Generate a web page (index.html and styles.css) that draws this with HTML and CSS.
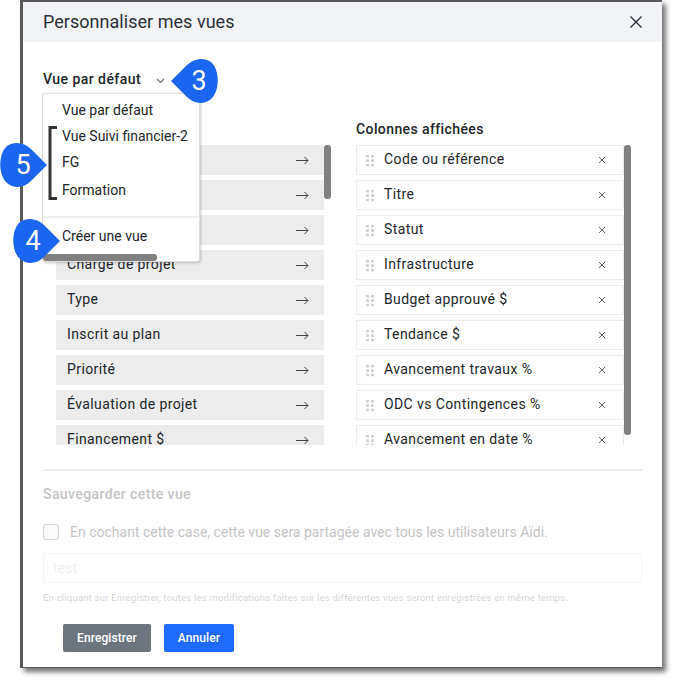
FILE: index.html
```html
<!doctype html>
<html lang="fr">
<head>
  <meta charset="UTF-8">
  <title>Personnaliser mes vues</title>
  <link rel="stylesheet" href="styles.css">
</head>
<body>
  <svg class="defs" width="0" height="0">
    <symbol id="arrow" viewBox="0 0 13 9"><path d="M0 4.5h12M8.5 1l3.5 3.5L8.5 8" stroke="#444" stroke-width="1" fill="none"/></symbol>
    <symbol id="cross" viewBox="0 0 8 8"><path d="M1 1l6 6M7 1L1 7" stroke="#666" stroke-width="1" fill="none"/></symbol>
  </svg>

  <div class="modal">
    <div class="modal-header">
      <h1>Personnaliser mes vues</h1>
      <svg class="close" width="14" height="14" viewBox="0 0 14 14"><path d="M1.5 1.5l11 11M12.5 1.5l-11 11" stroke="#2b2f36" stroke-width="1.4" fill="none"/></svg>
    </div>

    <div class="modal-body">
      <div class="view-select">
        <span>Vue par défaut</span>
        <svg width="9" height="6" viewBox="0 0 9 6"><path d="M1 1l3.5 3.5L8 1" stroke="#6c757d" stroke-width="1.2" fill="none"/></svg>
      </div>

      <div class="columns">
        <div class="col col-left">
          <div class="col-title">Colonnes disponibles</div>
          <div class="scroll-area">
            <div class="list">
              <div class="row"><span>Description</span><svg class="arrow"><use href="#arrow"/></svg></div>
              <div class="row"><span>Responsable</span><svg class="arrow"><use href="#arrow"/></svg></div>
              <div class="row"><span>Phase</span><svg class="arrow"><use href="#arrow"/></svg></div>
              <div class="row"><span>Chargé de projet</span><svg class="arrow"><use href="#arrow"/></svg></div>
              <div class="row"><span>Type</span><svg class="arrow"><use href="#arrow"/></svg></div>
              <div class="row"><span>Inscrit au plan</span><svg class="arrow"><use href="#arrow"/></svg></div>
              <div class="row"><span>Priorité</span><svg class="arrow"><use href="#arrow"/></svg></div>
              <div class="row"><span>Évaluation de projet</span><svg class="arrow"><use href="#arrow"/></svg></div>
              <div class="row"><span>Financement $</span><svg class="arrow"><use href="#arrow"/></svg></div>
            </div>
            <div class="scrollbar scrollbar-short"></div>
          </div>
        </div>

        <div class="col col-right">
          <div class="col-title">Colonnes affichées</div>
          <div class="scroll-area">
            <div class="list">
              <div class="row row-on"><i class="grip"></i><span>Code ou référence</span><svg class="remove"><use href="#cross"/></svg></div>
              <div class="row row-on"><i class="grip"></i><span>Titre</span><svg class="remove"><use href="#cross"/></svg></div>
              <div class="row row-on"><i class="grip"></i><span>Statut</span><svg class="remove"><use href="#cross"/></svg></div>
              <div class="row row-on"><i class="grip"></i><span>Infrastructure</span><svg class="remove"><use href="#cross"/></svg></div>
              <div class="row row-on"><i class="grip"></i><span>Budget approuvé $</span><svg class="remove"><use href="#cross"/></svg></div>
              <div class="row row-on"><i class="grip"></i><span>Tendance $</span><svg class="remove"><use href="#cross"/></svg></div>
              <div class="row row-on"><i class="grip"></i><span>Avancement travaux %</span><svg class="remove"><use href="#cross"/></svg></div>
              <div class="row row-on"><i class="grip"></i><span>ODC vs Contingences %</span><svg class="remove"><use href="#cross"/></svg></div>
              <div class="row row-on"><i class="grip"></i><span>Avancement en date %</span><svg class="remove"><use href="#cross"/></svg></div>
            </div>
            <div class="scrollbar scrollbar-long"></div>
          </div>
        </div>
      </div>

      <div class="save-section">
        <div class="save-title">Sauvegarder cette vue</div>
        <label class="share"><i class="checkbox"></i>En cochant cette case, cette vue sera partagée avec tous les utilisateurs Aïdi.</label>
        <div class="name-input">test</div>
        <div class="hint">En cliquant sur Enregistrer, toutes les modifications faites sur les différentes vues seront enregistrées en même temps.</div>
      </div>

      <div class="actions">
        <button class="btn btn-grey">Enregistrer</button>
        <button class="btn btn-blue">Annuler</button>
      </div>
    </div>

    <!-- menu ouvert par dessus les colonnes -->
    <div class="menu">
      <div class="menu-item">Vue par défaut</div>
      <div class="menu-item">Vue Suivi financier-2</div>
      <div class="menu-item">FG</div>
      <div class="menu-item">Formation</div>
      <div class="menu-sep"></div>
      <div class="menu-item menu-create">Créer une vue</div>
      <div class="menu-scroll"></div>
    </div>
  </div>

  <!-- annotations -->
  <svg class="bracket" width="10" height="74" viewBox="0 0 10 74"><path d="M9 1.5H2v71h7" stroke="#333" stroke-width="3" fill="none"/></svg>
  <div class="pin pin-3"><svg width="48" height="46" viewBox="0 0 48 46"><path d="M1 23 L17 7 C24 0 34 -1 41 4 C50 12 50 33 41 41 C34 47 24 46 17 39 Z" fill="#1a66f0"/></svg><span>3</span></div>
  <div class="pin pin-4"><svg width="48" height="46" viewBox="0 0 48 46"><path d="M47 23 L31 7 C24 0 14 -1 7 4 C-2 12 -2 33 7 41 C14 47 24 46 31 39 Z" fill="#1a66f0"/></svg><span>4</span></div>
  <div class="pin pin-5"><svg width="48" height="46" viewBox="0 0 48 46"><path d="M47 23 L31 7 C24 0 14 -1 7 4 C-2 12 -2 33 7 41 C14 47 24 46 31 39 Z" fill="#1a66f0"/></svg><span>5</span></div>
</body>
</html>
```

FILE: styles.css
```css
body {
  margin: 0;
  width: 677px;
  height: 683px;
  background: #fff;
  font-family: 'Roboto', sans-serif;
  color: #212529;
  overflow: hidden;
  position: relative;
}
.defs {
  position: absolute;
}
.modal {
  position: relative;
  box-sizing: border-box;
  width: 642px;
  height: 668px;
  margin-left: 20px;
  border-top: 2px solid #5a5a5a;
  border-left: 3px solid #5a5a5a;
  border-bottom: 1px solid #5a5a5a;
  background: #fff;
  box-shadow: 4px 4px 5px rgba(0, 0, 0, 0.55);
}
.modal-header {
  height: 40px;
  background: #f1f3f7;
  display: flex;
  align-items: center;
  justify-content: space-between;
  padding: 0 19px 0 20px;
}
.modal-header h1 {
  margin: 0 0 2px;
  font-size: 18px;
  font-weight: 400;
  letter-spacing: 0.03px;
  color: #2b3038;
}
.modal-body {
  padding: 0 20px;
}
.view-select {
  display: flex;
  align-items: center;
  gap: 15px;
  height: 20px;
  margin-top: 27px;
  font-size: 14px;
  font-weight: 500;
  letter-spacing: 0.45px;
}
.view-select svg {
  margin-top: 3px;
}
.columns {
  display: flex;
  gap: 25px;
  margin-top: 30px;
  margin-left: 13px;
}
.col {
  width: 275px;
}
.col-title {
  height: 26px;
  line-height: 20px;
  font-size: 14px;
  font-weight: 500;
  letter-spacing: 0.4px;
}
.scroll-area {
  position: relative;
  height: 300px;
  overflow: hidden;
}
.list {
  display: flex;
  flex-direction: column;
  gap: 5px;
  width: 268px;
}
.row {
  box-sizing: border-box;
  flex: none;
  display: flex;
  align-items: center;
  justify-content: space-between;
  height: 30px;
  padding: 0 15px 0 11px;
  background: #ececec;
  font-size: 14px;
  letter-spacing: 0.4px;
}
.row span {
  margin-bottom: 2px;
}
.arrow {
  width: 13px;
  height: 9px;
}
.row-on {
  background: #fff;
  border: 1px solid #ececec;
  padding: 0 17px 0 8px;
  justify-content: flex-start;
}
.grip {
  width: 10px;
  height: 13px;
  margin-right: 9px;
  background-image: radial-gradient(circle, #d2d2d2 1.5px, transparent 1.7px);
  background-size: 5px 4.4px;
}
.remove {
  width: 8px;
  height: 8px;
  margin-left: auto;
}
.scrollbar {
  position: absolute;
  top: 0;
  left: 268px;
  width: 7px;
  border-radius: 3px;
  background: #808080;
}
.scrollbar-short { height: 54px; }
.scrollbar-long { height: 290px; }
.save-section {
  margin-top: 24px;
  border-top: 2px solid #eee;
  color: #c4c4c4;
}
.save-title {
  margin-top: 14px;
  line-height: 18px;
  font-size: 14px;
  font-weight: 500;
  letter-spacing: 0.4px;
}
.share {
  display: flex;
  align-items: center;
  margin-top: 21px;
  font-size: 14px;
}
.checkbox {
  box-sizing: border-box;
  width: 16px;
  height: 16px;
  margin-right: 11px;
  border: 1px solid #d5d5d5;
  border-radius: 3px;
  background: #fafafa;
}
.name-input {
  box-sizing: border-box;
  height: 30px;
  margin-top: 13px;
  padding-left: 9px;
  border: 1px solid #f3f3f3;
  line-height: 28px;
  font-size: 14px;
  color: #f0f0f0;
}
.hint {
  margin-top: 9px;
  font-size: 9.5px;
  letter-spacing: 0.21px;
  color: #d6d6d6;
}
.actions {
  display: flex;
  gap: 13px;
  margin-top: 21px;
  margin-left: 20px;
}
.btn {
  height: 28px;
  border: none;
  border-radius: 2px;
  padding: 0;
  font-family: inherit;
  font-size: 12px;
  font-weight: 500;
  letter-spacing: 0.1px;
  color: #fff;
}
.btn-grey { width: 88px; background: #6c757d; }
.btn-blue { width: 70px; background: #1f6bff; }
.menu {
  position: absolute;
  top: 91px;
  left: 19px;
  box-sizing: border-box;
  width: 158px;
  height: 169px;
  padding-top: 3px;
  background: #fff;
  border: 1px solid #ddd;
  border-radius: 3px;
  box-shadow: 1px 1px 3px rgba(0, 0, 0, 0.2);
  font-size: 14px;
}
.menu-item {
  height: 26px;
  padding-left: 19px;
  line-height: 26px;
}
.menu-item:nth-child(3) {
  margin-bottom: 2px;
}
.menu-sep {
  height: 2px;
  margin-top: 13px;
  background: #eee;
}
.menu-create {
  margin-top: 5px;
}
.menu-scroll {
  position: absolute;
  left: 0;
  bottom: 0;
  width: 114px;
  height: 7px;
  border-radius: 3px;
  background: #808080;
}
.bracket {
  position: absolute;
  left: 48px;
  top: 126px;
}
.pin {
  position: absolute;
  width: 48px;
  height: 46px;
}
.pin svg { display: block; }
.pin span {
  position: absolute;
  top: 0;
  width: 44px;
  line-height: 46px;
  text-align: center;
  font-size: 27px;
  color: #fff;
}
.pin-3 { left: 170px; top: 58px; }
.pin-3 span { left: 7px; }
.pin-4 { left: 13px; top: 218px; }
.pin-4 span { left: -2px; }
.pin-5 { left: 0; top: 142px; }
.pin-5 span { left: 1px; }
```
